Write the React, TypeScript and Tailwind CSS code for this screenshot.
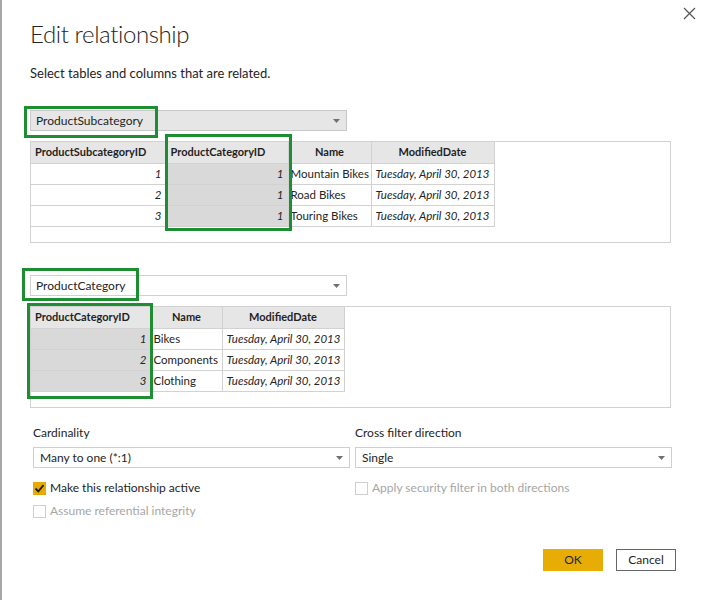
import React from "react";

const Arrow = () => (
  <svg width="7" height="4" viewBox="0 0 7 4" className="shrink-0">
    <path d="M0 0 L7 0 L3.5 4 Z" fill="#707070" />
  </svg>
);

type Col = { name: string; w: number; kind: "num" | "text" | "date"; hl?: boolean };

function DataTable({ cols, rows }: { cols: Col[]; rows: string[][] }) {
  const total = cols.reduce((a, c) => a + c.w, 0);
  return (
    <table className="border-collapse table-fixed text-[11.5px] text-[#252423]" style={{ width: total }}>
      <colgroup>
        {cols.map((c) => (
          <col key={c.name} style={{ width: c.w }} />
        ))}
      </colgroup>
      <thead>
        <tr className="h-[21px]">
          {cols.map((c, i) => (
            <th
              key={c.name}
              className={`bg-[#e6e6e6] border border-[#d2d2d2] border-t-0 font-bold text-[11px] text-[#1f1f1f] px-[4px] whitespace-nowrap overflow-hidden ${i === 0 || c.hl ? "text-left" : "text-center"} ${i === 0 ? "border-l-0" : ""}`}
            >
              {c.name}
            </th>
          ))}
        </tr>
      </thead>
      <tbody>
        {rows.map((r, ri) => (
          <tr key={ri} className="h-[21px]">
            {r.map((v, ci) => {
              const c = cols[ci];
              return (
                <td
                  key={ci}
                  className={`border border-[#d2d2d2] whitespace-nowrap overflow-hidden ${ci === 0 ? "border-l-0" : ""} ${c.hl ? "bg-[#d9d9d9]" : "bg-white"} ${c.kind === "num" ? "text-right italic pr-[4px]" : c.kind === "date" ? "italic px-[4px]" : "pl-[2px] pr-[2px]"}`}
                >
                  {v}
                </td>
              );
            })}
          </tr>
        ))}
      </tbody>
    </table>
  );
}

function Check({ checked, disabled, label }: { checked?: boolean; disabled?: boolean; label: string }) {
  return (
    <div className="flex items-center h-[20px] gap-[4px]">
      {checked ? (
        <div className="w-[13px] h-[13px] bg-[#e8a900] flex items-center justify-center">
          <svg width="11" height="11" viewBox="0 0 11 11">
            <path d="M1.5 5.5 L4.3 8.3 L9.5 2.2" stroke="#1a1a1a" strokeWidth="1.8" fill="none" />
          </svg>
        </div>
      ) : (
        <div className="w-[13px] h-[13px] border border-[#cfcfcf] bg-white" />
      )}
      <span className={`text-[12px] ${disabled ? "text-[#a6a6a6]" : "text-[#252423]"}`}>{label}</span>
    </div>
  );
}

export default function App() {
  const date = "Tuesday, April 30, 2013";
  return (
    <div className="w-[705px] h-[600px] bg-white relative border-l-2 border-[#a8a8a8] font-['Lato',sans-serif] text-[#252423] overflow-hidden">
      <button className="absolute top-[6px] right-[9px] w-[14px] h-[14px] flex items-center justify-center">
        <svg width="13" height="13" viewBox="0 0 13 13">
          <path d="M1 1 L12 12 M12 1 L1 12" stroke="#555" strokeWidth="1.2" />
        </svg>
      </button>

      <div className="pl-[28px] pt-[14px] flex flex-col">
        <div className="h-[40px] leading-[40px] text-[24px] font-light tracking-[-0.4px] text-[#252423]">Edit relationship</div>
        <div className="mt-[9px] h-[20px] leading-[20px] text-[13px]">Select tables and columns that are related.</div>

        {/* Table 1 */}
        <div className="relative mt-[27px] w-[317px] h-[21px] bg-[#e6e6e6] border border-[#c8c8c8] flex items-center justify-between pl-[5px] pr-[6px] text-[12px]">
          <span>ProductSubcategory</span>
          <Arrow />
          <div className="absolute left-[-7px] top-[-5px] w-[134px] h-[32px] border-[3px] border-[#1e8e32]" />
        </div>
        <div className="relative mt-[10px] w-[641px] h-[102px] border border-[#d2d2d2]">
          <DataTable
            cols={[
              { name: "ProductSubcategoryID", w: 135, kind: "num" },
              { name: "ProductCategoryID", w: 122, kind: "num", hl: true },
              { name: "Name", w: 83, kind: "text" },
              { name: "ModifiedDate", w: 123, kind: "date" },
            ]}
            rows={[
              ["1", "1", "Mountain Bikes", date],
              ["2", "1", "Road Bikes", date],
              ["3", "1", "Touring Bikes", date],
            ]}
          />
          <div className="absolute left-[134px] top-[-8px] w-[127px] h-[97px] border-[3px] border-[#1e8e32]" />
        </div>

        {/* Table 2 */}
        <div className="relative mt-[32px] w-[317px] h-[21px] bg-white border border-[#d0d0d0] flex items-center justify-between pl-[5px] pr-[6px] text-[12px]">
          <span>ProductCategory</span>
          <Arrow />
          <div className="absolute left-[-9px] top-[-8px] w-[117px] h-[33px] border-[3px] border-[#1e8e32]" />
        </div>
        <div className="relative mt-[10px] w-[641px] h-[102px] border border-[#d2d2d2]">
          <DataTable
            cols={[
              { name: "ProductCategoryID", w: 120, kind: "num", hl: true },
              { name: "Name", w: 71, kind: "text" },
              { name: "ModifiedDate", w: 122, kind: "date" },
            ]}
            rows={[
              ["1", "Bikes", date],
              ["2", "Components", date],
              ["3", "Clothing", date],
            ]}
          />
          <div className="absolute left-[-4px] top-[-4px] w-[126px] h-[96px] border-[3px] border-[#1e8e32]" />
        </div>

        {/* Options */}
        <div className="mt-[16px] pl-[3px] grid grid-cols-[317px_317px] gap-x-[5px]">
          <div className="h-[18px] leading-[18px] text-[12px]">Cardinality</div>
          <div className="h-[18px] leading-[18px] text-[12px]">Cross filter direction</div>
          <div className="mt-[5px] h-[21px] border border-[#cfcfcf] flex items-center justify-between pl-[6px] pr-[6px] text-[12px]">
            <span>Many to one (*:1)</span>
            <Arrow />
          </div>
          <div className="mt-[5px] h-[21px] border border-[#cfcfcf] flex items-center justify-between pl-[6px] pr-[6px] text-[12px]">
            <span>Single</span>
            <Arrow />
          </div>
          <div className="mt-[10px]">
            <Check checked label="Make this relationship active" />
          </div>
          <div className="mt-[10px]">
            <Check disabled label="Apply security filter in both directions" />
          </div>
          <div className="mt-[3px]">
            <Check disabled label="Assume referential integrity" />
          </div>
          <div />
        </div>

        <div className="mt-[28px] flex justify-end gap-[13px] pr-[29px]">
          <button className="w-[60px] h-[22px] bg-[#e8ad05] text-[12px] text-[#252423]">OK</button>
          <button className="w-[60px] h-[22px] bg-white border border-[#666] text-[12px] text-[#252423]">Cancel</button>
        </div>
      </div>
    </div>
  );
}
